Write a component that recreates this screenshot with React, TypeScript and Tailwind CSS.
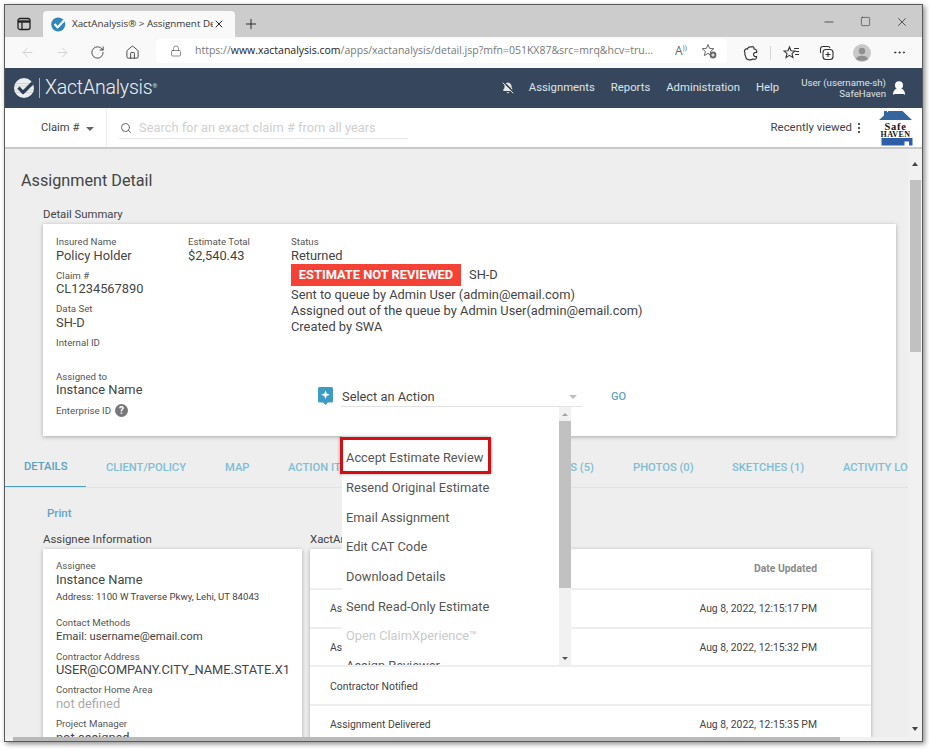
import React from 'react'
import { ArrowLeft, ArrowRight, BellOff, Lock, MoreHorizontal, Plus, RotateCw, Search, UserRound, X, Minus, Square, House } from 'lucide-react'

const NavLogoMark = () => (
   <svg width="20" height="20" viewBox="0 0 20 20" className="shrink-0">
      <circle cx="10" cy="10" r="10" fill="#eceef0" />
      <path d="M1 5.5 H19 M0.5 8 H19.5 M0.5 12 H19.5 M1 14.5 H19" stroke="#c3c8ce" strokeWidth="0.7" />
      <path d="M4.5 9.5 L9 14.5 L18.5 5" fill="none" stroke="#2f3f55" strokeWidth="3.2" strokeLinejoin="round" />
   </svg>
)

const Favicon = () => (
   <svg width="15" height="15" viewBox="0 0 15 15" className="shrink-0">
      <circle cx="7.2" cy="7.5" r="7" fill="#2f86bd" />
      <path d="M3.6 7 L6.5 10.4 L13 3.6" fill="none" stroke="#fff" strokeWidth="2.2" strokeLinejoin="round" />
   </svg>
)

const SidebarIcon = () => (
   <svg width="14" height="14" viewBox="0 0 14 14" fill="none" stroke="#222" strokeWidth="1.3">
      <rect x="1" y="1.5" width="12" height="11" rx="2" />
      <path d="M1 4.5 H13" strokeWidth="2.4" />
      <path d="M5 4.5 V12.5" />
   </svg>
)

const ExtensionIcon = () => (
   <svg width="16" height="16" viewBox="0 0 16 16" fill="none" stroke="#333" strokeWidth="1.2">
      <path d="M8 2 C10 1 11.5 2.5 11 4 C13 4 14.5 5.5 13.5 7.5 C12 7 10.5 8 10.5 9.5 C10.5 11 12 12 13.5 11.5 C14 13.5 12 15 10 14 C8 15.5 4 15 3 13 C3.5 11.5 1 10.5 2 8 C0.5 6 2 3.5 4.5 4 C4.5 3 6 1.5 8 2 Z" />
   </svg>
)

const FavStarIcon = () => (
   <svg width="18" height="16" viewBox="0 0 18 16" fill="none" stroke="#333" strokeWidth="1.1">
      <path d="M6.5 2 L8 5.7 L12 6 L9 8.6 L10 12.6 L6.5 10.4 L3 12.6 L4 8.6 L1 6 L5 5.7 Z" />
      <path d="M11 3.5 H16 M12.5 6.5 H16 M12 9.5 H16" />
   </svg>
)

const CollectionsIcon = () => (
   <svg width="17" height="17" viewBox="0 0 17 17" fill="none" stroke="#333" strokeWidth="1.1">
      <path d="M5 2.5 H10 A2 2 0 0 1 12 4" />
      <path d="M2.5 9 V5 A2.5 2.5 0 0 1 5 2.5" />
      <rect x="5" y="5.5" width="10" height="10" rx="3" />
      <path d="M10 8 V13 M7.5 10.5 H12.5" />
   </svg>
)

const StarAddIcon = () => (
   <svg width="16" height="16" viewBox="0 0 16 16" fill="none" stroke="#666" strokeWidth="1">
      <path d="M7 1.5 L8.6 5.4 L12.8 5.7 L9.6 8.4 L10.6 12.6 L7 10.4 L3.4 12.6 L4.4 8.4 L1.2 5.7 L5.4 5.4 Z" />
      <circle cx="12" cy="12" r="3.4" fill="#666" stroke="none" />
      <path d="M10.4 12 H13.6 M12 10.4 V13.6" stroke="#fff" />
   </svg>
)

const AvatarIcon = () => (
   <svg width="18" height="18" viewBox="0 0 18 18">
      <circle cx="9" cy="9" r="9" fill="#c8c8c8" />
      <circle cx="9" cy="7" r="3.2" fill="#8f8f8f" />
      <path d="M3 15 C4 10.8 14 10.8 15 15 C13 17.4 5 17.4 3 15 Z" fill="#8f8f8f" />
   </svg>
)

const SafeHavenLogo = () => (
   <svg width="35" height="35" viewBox="0 0 35 35">
      <path d="M6 0 H9 V1.5 L10.5 0 H24.5 L34 9 H1 L6 4.5 Z" fill="#35659f" />
      <text x="17.5" y="18.5" textAnchor="middle" fontFamily="'Liberation Serif', serif" fontWeight="700" fontSize="10.5" letterSpacing="0.7" fill="#151515">
         Safe
      </text>
      <text x="17.5" y="26" textAnchor="middle" fontFamily="'Liberation Serif', serif" fontWeight="700" fontSize="8" letterSpacing="0.4" fill="#151515">
         HAVEN
      </text>
      <path d="M3.5 27 H34.5 V34.5 H31 V30.5 H26.5 V34.5 H3.5 Z" fill="#2f5ea8" />
   </svg>
)

const ActionIcon = () => (
   <svg width="15" height="18" viewBox="0 0 15 18">
      <path d="M1.5 0 H13.5 A1.5 1.5 0 0 1 15 1.5 V14 A1.5 1.5 0 0 1 13.5 15.5 H10 L7.5 18 L5 15.5 H1.5 A1.5 1.5 0 0 1 0 14 V1.5 A1.5 1.5 0 0 1 1.5 0 Z" fill="#3c9cc4" />
      <path d="M7.5 3.5 L8.7 6.6 L11.8 7.8 L8.7 9 L7.5 12 L6.3 9 L3.2 7.8 L6.3 6.6 Z" fill="#fff" />
   </svg>
)

const Field = ({ label, value, small, muted }: { label: string; value?: string; small?: boolean; muted?: boolean }) => (
   <div className="h-[33.67px]">
      <div className="text-[9.7px] leading-[12px] text-[#555]">{label}</div>
      {value && (
         <div className={`${small ? 'text-[11.3px]' : 'text-[12.85px]'} leading-[16px] -mt-[0.5px] ${muted ? 'text-[#aaaaaa]' : 'text-[#444]'}`}>
            {value}
         </div>
      )}
   </div>
)

const tabs = [
   { label: 'DETAILS', className: 'w-[81px] pl-[19px] text-[#5c9fbe] border-b-2 border-[#4b9fc4]' },
   { label: 'CLIENT/POLICY', className: 'w-[120px] pl-[20px]' },
   { label: 'MAP', className: 'w-[63px] pl-[19px]' },
   { label: 'ACTION ITEMS (0)', className: 'w-[144px] pl-[19px]' },
   { label: 'DOCUMENTS (5)', className: 'w-[220px] justify-end pr-[39px]' },
   { label: 'PHOTOS (0)', className: 'w-[99px]' },
   { label: 'SKETCHES (1)', className: 'w-[111px]' },
   { label: 'ACTIVITY LOG', className: 'w-[120px]' },
]

const menuItems = [
   'Accept Estimate Review',
   'Resend Original Estimate',
   'Email Assignment',
   'Edit CAT Code',
   'Download Details',
   'Send Read-Only Estimate',
   'Open ClaimXperience™',
   'Assign Reviewer',
]

const rows = [
   { name: 'Assignment Created', date: 'Aug 8, 2022, 12:15:17 PM' },
   { name: 'Assignment Sent', date: 'Aug 8, 2022, 12:15:32 PM' },
   { name: 'Contractor Notified', date: '' },
   { name: 'Assignment Delivered', date: 'Aug 8, 2022, 12:15:35 PM' },
]

const App = () => {
   return (
      <div className="w-[929px] h-[750px] bg-white pl-[4px] pt-[4px] overflow-hidden font-['Roboto',sans-serif]">
         <div className="w-[919px] h-[738px] border border-[#5a5a5a] shadow-[2px_2px_5px_rgba(0,0,0,0.45)] flex flex-col overflow-hidden">
            {/* tab strip */}
            <div className="h-[32px] shrink-0 bg-[#cccccc] flex items-end font-['Open_Sans',sans-serif]">
               <div className="w-[38px] h-[26px] flex items-center pl-[12px] pb-[1px] self-end">
                  <SidebarIcon />
               </div>
               <div className="w-[192px] h-[26px] bg-[#f9f9f9] rounded-t-[4px] flex items-center pl-[8px]">
                  <Favicon />
                  <span className="ml-[6px] w-[141px] text-[9.8px] text-[#333] whitespace-nowrap overflow-hidden">XactAnalysis® &gt; Assignment Det</span>
                  <X size={12} strokeWidth={2} color="#222" />
               </div>
               <div className="h-[26px] flex items-center pl-[8px]">
                  <Plus size={16} strokeWidth={1.4} color="#222" />
               </div>
               <div className="flex-1" />
               <div className="h-[32px] flex items-center gap-[24px] pr-[13px] pt-[1px]">
                  <Minus size={14} strokeWidth={1.2} color="#222" />
                  <Square size={11} strokeWidth={1.2} color="#222" />
                  <X size={14} strokeWidth={1.2} color="#222" />
               </div>
            </div>

            {/* address bar */}
            <div className="h-[31px] shrink-0 bg-[#f9f9f9] flex items-center">
               <div className="w-[151px] flex items-center pl-[15px] gap-[20px]">
                  <ArrowLeft size={15} strokeWidth={1.2} color="#c4c4c4" />
                  <ArrowRight size={15} strokeWidth={1.2} color="#c4c4c4" />
                  <RotateCw size={15} strokeWidth={1.4} color="#333" />
                  <House size={15} strokeWidth={1.4} color="#333" />
               </div>
               <div className="w-[571px] h-[24px] mb-[3px] bg-white rounded-[4px] flex items-center pl-[14px] font-['Open_Sans',sans-serif]">
                  <Lock size={12} strokeWidth={1.3} color="#555" />
                  <span className="ml-[13px] w-[470px] text-[10.5px] text-[#777] whitespace-nowrap overflow-hidden">
                     https://<span className="text-[#222]">www.xactanalysis.com</span>/apps/xactanalysis/detail.jsp?mfn=051KX87&amp;src=mrq&amp;hcv=tru...
                  </span>
                  <span className="ml-[10px] text-[12px] text-[#666]">A</span>
                  <span className="text-[7px] text-[#666] mb-[6px] w-[18px]">))</span>
                  <StarAddIcon />
               </div>
               <div className="flex items-center pl-[16px]">
                  <ExtensionIcon />
                  <div className="w-px h-[14px] bg-[#d5d5d5] ml-[11px] mr-[12px]" />
                  <FavStarIcon />
                  <div className="ml-[17px]">
                     <CollectionsIcon />
                  </div>
                  <div className="ml-[18px]">
                     <AvatarIcon />
                  </div>
                  <MoreHorizontal size={15} strokeWidth={1.6} color="#333" className="ml-[21px]" />
               </div>
            </div>

            {/* app nav */}
            <div className="h-[40px] shrink-0 bg-[#36475d] flex items-center text-[#dfe3e8]">
               <div className="pl-[9px] flex items-center">
                  <NavLogoMark />
                  <div className="w-px h-[20px] bg-[#aab2bd] ml-[5px] mr-[5px]" />
                  <span className="text-[19.5px] font-light text-[#eef0f2] tracking-[-0.2px]">XactAnalysis</span>
                  <span className="text-[6px] mb-[6px]">®</span>
               </div>
               <div className="flex-1" />
               <BellOff size={12} strokeWidth={2} color="#e6e6e6" fill="#e6e6e6" />
               <div className="flex items-center gap-[16px] text-[11.3px] ml-[15px]">
                  <span>Assignments</span>
                  <span>Reports</span>
                  <span>Administration</span>
                  <span>Help</span>
               </div>
               <div className="ml-[22px] text-right text-[9.7px] leading-[11px]">
                  <div>User (username-sh)</div>
                  <div>SafeHaven</div>
               </div>
               <UserRound size={16} strokeWidth={2} color="#fff" fill="#fff" className="ml-[5px] mr-[15px]" />
            </div>

            {/* search row */}
            <div className="h-[41px] shrink-0 bg-white border-b-2 border-[#c9c9c9] flex items-center">
               <div className="w-[102px] h-full border-r border-[#eeeeee] flex items-center pl-[36px] pt-[2px] text-[11.2px] text-[#444]">
                  Claim #
                  <span className="ml-[7px] w-0 h-0 border-x-[4px] border-x-transparent border-t-[4px] border-t-[#666]" />
               </div>
               <div className="ml-[12px] w-[289px] h-[21px] mt-[1px] border-b border-[#e6e6e6] flex items-center">
                  <Search size={12} strokeWidth={2} color="#666" className="ml-[1px]" />
                  <span className="ml-[7px] text-[12.85px] text-[#cfcfcf] whitespace-nowrap">Search for an exact claim # from all years</span>
               </div>
               <div className="flex-1" />
               <span className="text-[11.4px] text-[#444]">Recently viewed</span>
               <div className="ml-[6px] flex flex-col gap-[2px]">
                  <span className="w-[2px] h-[2px] bg-[#555]" />
                  <span className="w-[2px] h-[2px] bg-[#555]" />
                  <span className="w-[2px] h-[2px] bg-[#555]" />
               </div>
               <div className="ml-[18px] mr-[9px] mt-[1px]">
                  <SafeHavenLogo />
               </div>
            </div>

            {/* page body */}
            <div className="flex flex-1 min-h-0">
               <div className="w-[903px] bg-[#eeeeee] overflow-hidden">
                  <h1 className="pt-[22px] pl-[16px] text-[16.2px] leading-[20px] text-[#444]">Assignment Detail</h1>
                  <div className="mt-[17px] ml-[38px] text-[11.3px] leading-[14px] text-[#444]">Detail Summary</div>

                  <div className="mt-[2px] ml-[38px] w-[853px] h-[212px] bg-white shadow-[0_1px_4px_rgba(0,0,0,0.3)] flex pt-[12px] pl-[13px]">
                     <div className="w-[132px]">
                        <Field label="Insured Name" value="Policy Holder" />
                        <Field label="Claim #" value="CL1234567890" />
                        <Field label="Data Set" value="SH-D" />
                        <Field label="Internal ID" />
                        <Field label="Assigned to" value="Instance Name" />
                        <div className="flex items-center text-[9.7px] leading-[12px] text-[#555]">
                           Enterprise ID
                           <span className="ml-[4px] w-[13px] h-[13px] rounded-full bg-[#777] text-white text-[10px] font-bold flex items-center justify-center">?</span>
                        </div>
                     </div>
                     <div className="w-[103px]">
                        <Field label="Estimate Total" value="$2,540.43" />
                     </div>
                     <div className="flex-1">
                        <div className="text-[9.7px] leading-[12px] text-[#555]">Status</div>
                        <div className="text-[12.85px] leading-[16px] -mt-[0.5px] text-[#444]">Returned</div>
                        <div className="flex items-center mt-[0.5px]">
                           <span className="w-[170px] h-[22px] bg-[#f44336] text-white text-[12.85px] font-bold flex items-center justify-center">ESTIMATE NOT REVIEWED</span>
                           <span className="ml-[8px] text-[12.85px] text-[#444]">SH-D</span>
                        </div>
                        <div className="text-[12.85px] leading-[16px] text-[#444] mt-[1px]">
                           <div>Sent to queue by Admin User (admin@email.com)</div>
                           <div>Assigned out of the queue by Admin User(admin@email.com)</div>
                           <div>Created by SWA</div>
                        </div>

                        <div className="mt-[52px] ml-[27px] flex items-start">
                           <ActionIcon />
                           <div className="relative ml-[8px] w-[241px] h-[20px] border-b border-[#e3e3e3] flex items-center justify-between pr-[5px] text-[12.85px] text-[#444]">
                              <span className="pl-[1px] pt-[1px]">Select an Action</span>
                              <span className="w-0 h-0 border-x-[4px] border-x-transparent border-t-[4px] border-t-[#bdbdbd]" />

                              {/* open action menu */}
                              <div className="absolute z-10 left-[1px] top-[20px] w-[229px] h-[258px] bg-white flex">
                                 <div className="relative w-[217px] h-full overflow-hidden pt-[36px] pl-[4px] text-[12.85px] text-[#555]">
                                    {menuItems.map((item) => (
                                       <div key={item} className={`h-[29.7px] flex items-center ${item.startsWith('Open') ? 'text-[#c9c9c9]' : ''}`}>
                                          {item}
                                       </div>
                                    ))}
                                 </div>
                                 <div className="absolute left-[-2px] top-[30px] w-[151px] h-[37px] border-[3px] border-[#d40f14] shadow-[0_0_3px_rgba(0,0,0,0.4)]" />
                                 <div className="w-[12px] h-full bg-[#f1f1f1] flex flex-col items-center">
                                    <div className="h-[14px] flex items-center">
                                       <span className="w-0 h-0 border-x-[3px] border-x-transparent border-b-[3px] border-b-[#a3a3a3]" />
                                    </div>
                                    <div className="w-full h-[167px] bg-[#c1c1c1]" />
                                    <div className="flex-1" />
                                    <div className="h-[14px] flex items-center">
                                       <span className="w-0 h-0 border-x-[3px] border-x-transparent border-t-[3px] border-t-[#505050]" />
                                    </div>
                                 </div>
                              </div>
                           </div>
                           <span className="ml-[29px] mt-[2px] text-[11px] font-medium text-[#5ea6c8]">GO</span>
                        </div>
                     </div>
                  </div>

                  {/* tabs */}
                  <div className="mt-[19px] h-[33px] border-b border-[#e2e2e2] flex overflow-hidden text-[11.2px] font-medium text-[#7fbdd4]">
                     {tabs.map((tab) => (
                        <div key={tab.label} className={`h-[33px] shrink-0 flex items-center whitespace-nowrap overflow-hidden pb-[7px] ${tab.className}`}>
                           {tab.label}
                        </div>
                     ))}
                  </div>

                  <div className="mt-[18px] ml-[42px] text-[11.5px] leading-[14px] font-medium text-[#5ea6c8]">Print</div>

                  <div className="mt-[12px] ml-[38px] flex gap-[8px]">
                     <div className="w-[259px] shrink-0">
                        <div className="text-[11.4px] leading-[14px] text-[#444]">Assignee Information</div>
                        <div className="mt-[3px] h-[220px] bg-white shadow-[0_1px_4px_rgba(0,0,0,0.3)] pt-[11px] pl-[13px]">
                           <Field label="Assignee" value="Instance Name" />
                           <div className="text-[9.6px] leading-[12px] text-[#444] -mt-[3px]">Address: 1100 W Traverse Pkwy, Lehi, UT 84043</div>
                           <div className="h-[14.5px]" />
                           <Field label="Contact Methods" value="Email: username@email.com" small />
                           <Field label="Contractor Address" value="USER@COMPANY.CITY_NAME.STATE.X1" />
                           <Field label="Contractor Home Area" value="not defined" muted />
                           <Field label="Project Manager" value="not assigned" />
                        </div>
                     </div>
                     <div className="w-[561px] shrink-0">
                        <div className="text-[11.4px] leading-[14px] text-[#444] whitespace-nowrap">XactAnalysis History</div>
                        <div className="mt-[3px] h-[220px] bg-white shadow-[0_1px_4px_rgba(0,0,0,0.3)] text-[10.4px] text-[#444]">
                           <div className="h-[41px] border-b-2 border-[#eeeeee] flex items-center justify-end pr-[54px] font-bold text-[#8a8a8a]">Date Updated</div>
                           {rows.map((row) => (
                              <div key={row.name} className="h-[38.6px] border-b-2 border-[#eeeeee] flex items-center justify-between pl-[20px] pr-[54px] pt-[2px]">
                                 <span>{row.name}</span>
                                 <span>{row.date}</span>
                              </div>
                           ))}
                        </div>
                     </div>
                  </div>
               </div>

               {/* vertical scrollbar */}
               <div className="w-[14px] bg-[#f1f1f1] flex flex-col items-center">
                  <div className="h-[31px] pt-[13px]">
                     <span className="block w-0 h-0 border-x-[3px] border-x-transparent border-b-[4px] border-b-[#444]" />
                  </div>
                  <div className="w-[11px] h-[172px] bg-[#c1c1c1]" />
                  <div className="flex-1" />
                  <div className="h-[14px] pt-[4px]">
                     <span className="block w-0 h-0 border-x-[3px] border-x-transparent border-t-[4px] border-t-[#444]" />
                  </div>
               </div>
            </div>

            {/* horizontal scrollbar */}
            <div className="h-[4px] shrink-0 bg-[#f1f1f1] flex">
               <div className="w-[8px]" />
               <div className="w-[827px] bg-[#b9b9b9]" />
            </div>
         </div>
      </div>
   )
}

export default App
